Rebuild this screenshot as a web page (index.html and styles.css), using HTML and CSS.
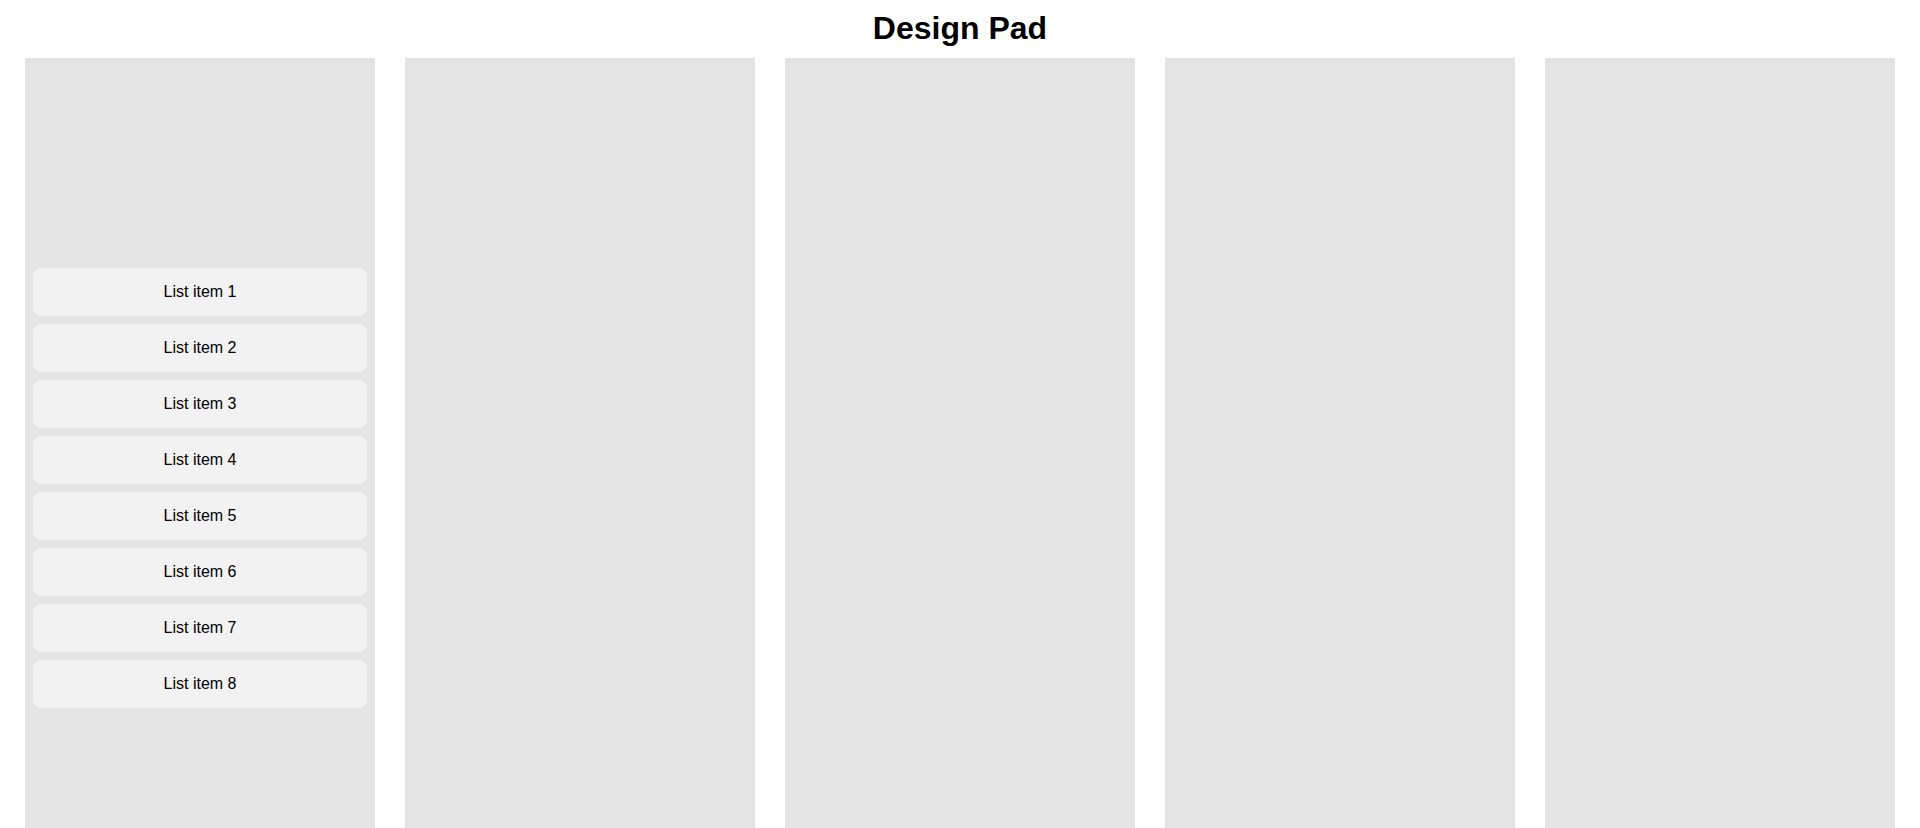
FILE: index.html
```html
<!DOCTYPE html>
<html lang="en">
<head>
    <meta charset="UTF-8">
    <meta name="viewport" content="width=device-width, initial-scale=1.0">
    <title>Design Pad</title>
    <link rel="stylesheet" href="styles.css">
</head>
<body>
    <h1 class="title">Design Pad</h1>
    <div class="board">
        <div class="column">
            <div class="item">List item 1</div>
            <div class="item">List item 2</div>
            <div class="item">List item 3</div>
            <div class="item">List item 4</div>
            <div class="item">List item 5</div>
            <div class="item">List item 6</div>
            <div class="item">List item 7</div>
            <div class="item">List item 8</div>
        </div>
        <div class="column"></div>
        <div class="column"></div>
        <div class="column"></div>
        <div class="column"></div>
    </div>
</body>
</html>
```

FILE: styles.css
```css
body{
    margin: 0;
    font-family: "Liberation Sans", Arial, sans-serif;
    color: #000;
    background: #fff;
}
.title{
    margin: 10px 0 11px;
    font-size: 32px;
    line-height: 37px;
    text-align: center;
}
.board{
    display: flex;
    gap: 30px;
    padding: 0 25px;
}
.column{
    flex: 0 0 350px;
    height: 860px;
    background-color: #e4e4e4;
    display: flex;
    flex-direction: column;
    justify-content: center;
    gap: 8px;
    padding: 0 8px;
    box-sizing: border-box;
}
.item{
    height: 48px;
    line-height: 48px;
    background-color: #f2f2f2;
    border-radius: 8px;
    text-align: center;
    font-size: 16px;
}
```
